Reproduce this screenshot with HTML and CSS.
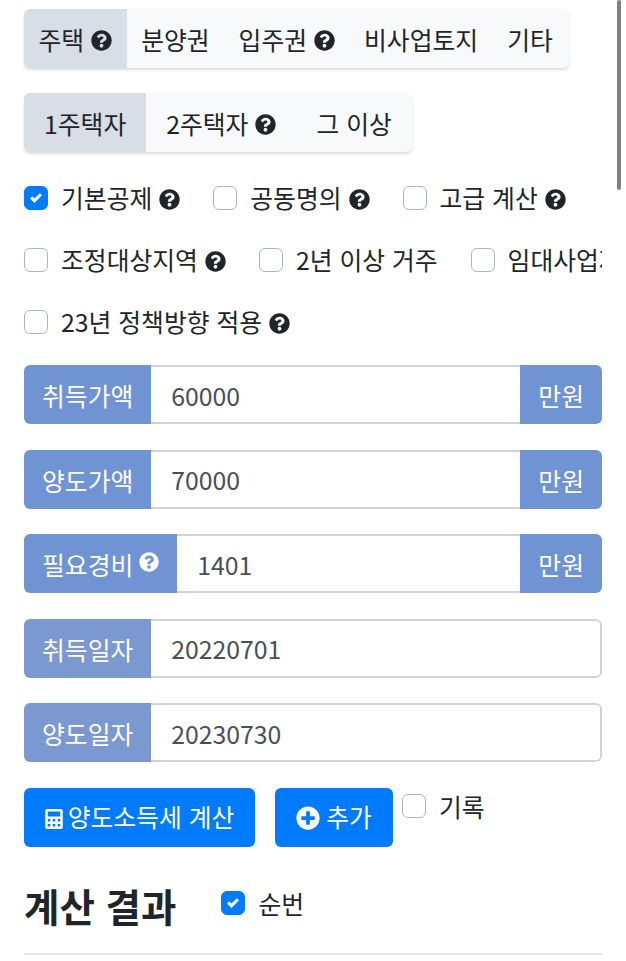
FILE: index.html
```html
<!DOCTYPE html>
<html lang="ko">
<head>
<meta charset="utf-8">
<title>양도소득세 계산</title>
<link rel="stylesheet" href="styles.css">
</head>
<body>
<svg class="defs" width="0" height="0" aria-hidden="true">
  <symbol id="q" viewBox="0 0 512 512"><path fill="currentColor" d="M504 256c0 136.997-111.043 248-248 248S8 392.997 8 256C8 119.083 119.043 8 256 8s248 111.083 248 248zM262.655 90c-54.497 0-89.255 22.957-116.549 63.758-3.536 5.286-2.353 12.415 2.715 16.258l34.699 26.31c5.205 3.947 12.621 3.008 16.665-2.122 17.864-22.658 30.113-35.797 57.303-35.797 20.429 0 45.698 13.148 45.698 32.958 0 14.976-12.363 22.667-32.534 33.976C247.128 238.528 216 254.941 216 296v4c0 6.627 5.373 12 12 12h56c6.627 0 12-5.373 12-12v-1.333c0-28.462 83.186-29.647 83.186-106.667 0-58.002-60.165-102-116.531-102zM256 338c-25.365 0-46 20.635-46 46 0 25.364 20.635 46 46 46s46-20.636 46-46c0-25.365-20.635-46-46-46z"/></symbol>
  <symbol id="plus" viewBox="0 0 512 512"><path fill="currentColor" d="M256 8C119 8 8 119 8 256s111 248 248 248 248-111 248-248S393 8 256 8zm144 276c0 6.6-5.4 12-12 12h-92v92c0 6.6-5.4 12-12 12h-56c-6.6 0-12-5.4-12-12v-92h-92c-6.6 0-12-5.4-12-12v-56c0-6.6 5.4-12 12-12h92v-92c0-6.6 5.4-12 12-12h56c6.6 0 12 5.4 12 12v92h92c6.6 0 12 5.4 12 12v56z"/></symbol>
  <symbol id="calc" viewBox="0 0 448 512"><path fill="currentColor" fill-rule="evenodd" d="M48 0h352c26 0 48 22 48 48v416c0 26-22 48-48 48H48c-26 0-48-22-48-48V48C0 22 22 0 48 0zM64 64v128h320V64zM64 256v64h64v-64zM192 256v64h64v-64zM320 256v64h64v-64zM64 384v64h64v-64zM192 384v64h64v-64zM320 384v64h64v-64z"/></symbol>
  <symbol id="check" viewBox="0 0 8 8"><path fill="#fff" d="M6.564.75l-3.59 3.612-1.538-1.55L0 4.26l2.974 2.99L8 2.193z"/></symbol>
</svg>

<main class="page">
  <nav class="tabs">
    <a class="tab active">주택 <svg class="qi"><use href="#q"/></svg></a>
    <a class="tab">분양권</a>
    <a class="tab">입주권 <svg class="qi"><use href="#q"/></svg></a>
    <a class="tab">비사업토지</a>
    <a class="tab">기타</a>
  </nav>

  <nav class="tabs second">
    <a class="tab wide active">1주택자</a>
    <a class="tab wide">2주택자 <svg class="qi"><use href="#q"/></svg></a>
    <a class="tab wide">그 이상</a>
  </nav>

  <div class="checks">
    <label class="check"><span class="box on"><svg class="tick"><use href="#check"/></svg></span>기본공제 <svg class="qi"><use href="#q"/></svg></label>
    <label class="check"><span class="box"></span>공동명의 <svg class="qi"><use href="#q"/></svg></label>
    <label class="check"><span class="box"></span>고급 계산 <svg class="qi"><use href="#q"/></svg></label>
  </div>
  <div class="checks">
    <label class="check"><span class="box"></span>조정대상지역 <svg class="qi"><use href="#q"/></svg></label>
    <label class="check"><span class="box"></span>2년 이상 거주</label>
    <label class="check"><span class="box"></span>임대사업자</label>
  </div>
  <div class="checks">
    <label class="check"><span class="box"></span>23년 정책방향 적용 <svg class="qi"><use href="#q"/></svg></label>
  </div>

  <div class="group first">
    <span class="addon">취득가액</span>
    <span class="field">60000</span>
    <span class="addon unit">만원</span>
  </div>
  <div class="group">
    <span class="addon">양도가액</span>
    <span class="field">70000</span>
    <span class="addon unit">만원</span>
  </div>
  <div class="group">
    <span class="addon">필요경비 <svg class="qi light"><use href="#q"/></svg></span>
    <span class="field">1401</span>
    <span class="addon unit">만원</span>
  </div>
  <div class="group">
    <span class="addon muted">취득일자</span>
    <span class="field end">20220701</span>
  </div>
  <div class="group">
    <span class="addon muted">양도일자</span>
    <span class="field end">20230730</span>
  </div>

  <div class="actions">
    <button class="btn calc-btn"><svg class="calc"><use href="#calc"/></svg> 양도소득세 계산</button>
    <button class="btn add-btn"><svg class="plus"><use href="#plus"/></svg> 추가</button>
    <label class="check log"><span class="box"></span>기록</label>
  </div>

  <div class="result">
    <h2>계산 결과</h2>
    <label class="check seq"><span class="box on"><svg class="tick"><use href="#check"/></svg></span>순번</label>
  </div>
  <hr class="rule">
</main>
<div class="scrollbar"></div>
</body>
</html>
```
FILE: styles.css
```css
* { box-sizing: border-box; }
html, body { margin: 0; height: 961px; overflow: hidden; background: #fff; }
body {
  font-family: "Noto Sans CJK KR", "Noto Sans", sans-serif;
  font-size: 24.8px;
  line-height: 1.5;
  color: #212529;
}
.defs { position: absolute; }
.page { width: 578px; margin-left: 24px; padding-top: 9px; }

.tabs {
  display: flex;
  width: 545px;
  height: 59px;
  background: #f8f9fa;
  border-radius: 6px;
  box-shadow: 0 2px 3px rgba(0,0,0,.14);
  overflow: hidden;
}
.tabs.second { width: 388px; margin-top: 25px; }
.tab {
  display: flex;
  align-items: center;
  gap: 7px;
  padding: 2px 14.5px 0;
  white-space: nowrap;
}
.tab.wide { padding: 2px 20px 0; }
.tab.active { background: #d9dde6; }
.qi { width: 21px; height: 21px; margin-top: 3px; color: #212529; flex: none; }
.tab .qi { margin-top: 2px; }
.qi.light { color: #fff; margin-top: -7px; width: 20px; height: 20px; }

.checks {
  display: flex;
  gap: 33px;
  height: 62px;
  align-items: center;
  overflow: hidden;
  white-space: nowrap;
}
.checks:first-of-type { margin-top: 15px; }
.check { display: flex; align-items: center; gap: 7px; flex: none; margin-top: -1px; }
.box {
  width: 24px;
  height: 24px;
  margin-right: 6px;
  border: 1px solid #adb5bd;
  border-radius: 6px;
  background: #fff;
  display: flex;
  align-items: center;
  justify-content: center;
  flex: none;
}
.box.on { background: #007bff; border-color: #007bff; }
.tick { width: 12px; height: 12px; }

.group {
  display: flex;
  height: 59px;
  margin-top: 25.5px;
  border-radius: 6px;
  overflow: hidden;
}
.group.first { margin-top: 12px; }
.addon {
  display: flex;
  align-items: center;
  gap: 6px;
  padding: 3px 18px 0;
  background: #7093d4;
  color: #fff;
  white-space: nowrap;
}
.addon.muted { background: #7b98d1; }
.field {
  flex: 1;
  display: flex;
  align-items: center;
  padding: 2px 20px 0;
  background: #fff;
  color: #495057;
  border-top: 2px solid #ced4da;
  border-bottom: 2px solid #ced4da;
}
.field.end { border-right: 2px solid #ced4da; border-radius: 0 6px 6px 0; }

.actions { display: flex; align-items: flex-start; margin-top: 25.5px; }
.btn {
  display: flex;
  align-items: center;
  justify-content: center;
  gap: 5px;
  height: 59px;
  padding: 0;
  border: 0;
  border-radius: 6px;
  background: #007bff;
  color: #fff;
  font: inherit;
}
.calc-btn { width: 231px; }
.add-btn { width: 118px; margin-left: 20px; gap: 6px; }
.calc { width: 18px; height: 20px; margin-top: 3px; }
.plus { width: 24px; height: 24px; margin-top: 2px; }
.check.log { margin: 0 0 0 9px; }

.result { display: flex; align-items: flex-start; margin-top: 30px; }
h2 { margin: -3px 0 0; font-size: 38.5px; line-height: 62px; font-weight: 700; }
.check.seq { margin: 8px 0 0 45px; }
.rule { margin: 17px 0 0; border: 0; border-top: 2px solid #e3e5e8; }

.scrollbar {
  position: absolute;
  top: 0;
  right: 5px;
  width: 4px;
  height: 190px;
  border-radius: 2px;
  background: #7f8285;
}
```
